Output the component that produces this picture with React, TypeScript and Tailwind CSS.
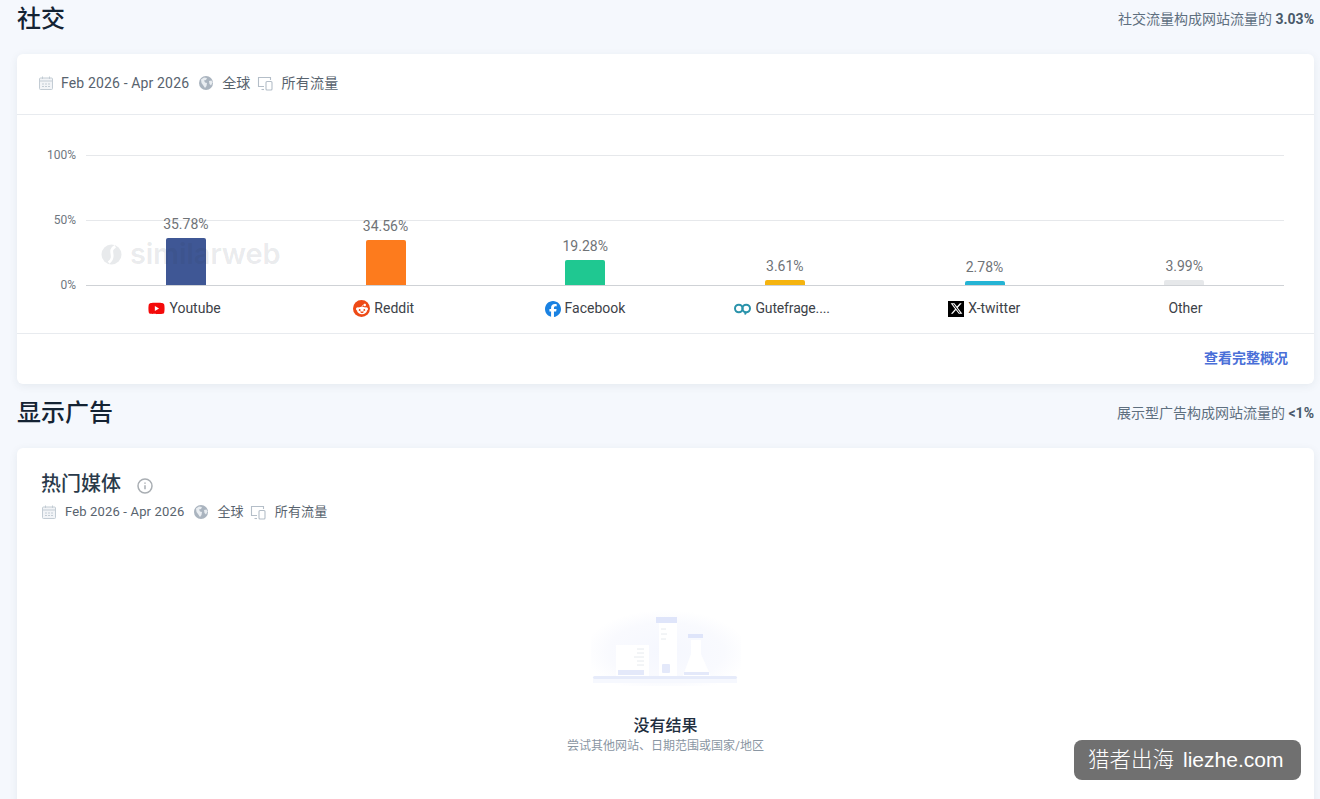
import { FaFacebook, FaRedditAlien, FaXTwitter, FaYoutube } from "react-icons/fa6";

const CalendarIcon = () => (
  <svg width="16" height="16" viewBox="0 0 16 16" fill="none" stroke="#c3ccd4" strokeWidth="1">
    <rect x="1.500" y="3" width="13" height="11.500" rx="1" fill="#f2f4f7" />
    <path d="M1.500 6h13M4.500 1.500v2.500M11.500 1.500v2.500" />
    <path d="M4 9h2M7 9h2M10 9h2M4 11.500h2M7 11.500h2M10 11.500h2" stroke="#c3ccd4" />
  </svg>
);

const GlobeIcon = () => (
  <svg width="16" height="16" viewBox="0 0 16 16">
    <circle cx="8" cy="8" r="7" fill="#aab4bf" />
    <path d="M3 4.500l3-2 3 .5-1 2-2 .5 1 2 2 .5-.5 3-1.500 2L5 10 3.500 8z" fill="#e9edf1" />
    <path d="M11 6l2.500-.5 1 2-1.500 3-1.500-1.500z" fill="#e9edf1" />
  </svg>
);

const DevicesIcon = () => (
  <svg width="17" height="16" viewBox="0 0 17 16" fill="none" stroke="#b4bec8" strokeWidth="1.100">
    <path d="M7 11.500H1.500v-9h12V5" />
    <path d="M4.500 14.500H7" />
    <rect x="9" y="6.500" width="6" height="8.500" rx="1" />
  </svg>
);

const InfoIcon = () => (
  <svg width="16" height="16" viewBox="0 0 16 16" fill="none" stroke="#a9aeb3" strokeWidth="1.500">
    <circle cx="8" cy="8" r="7" />
    <path d="M8 7.200v4" />
    <path d="M8 4.400v1.400" />
  </svg>
);

const RedditIcon = () => (
  <span className="flex h-[17px] w-[17px] items-center justify-center rounded-full bg-[#ee4a16] text-white">
    <FaRedditAlien size={12} />
  </span>
);

const GutefrageIcon = () => (
  <svg width="17" height="12" viewBox="0 0 17 12" fill="none" stroke="#2a93ab" strokeWidth="2">
    <circle cx="4.800" cy="5.500" r="3.800" />
    <circle cx="12.200" cy="5.500" r="3.800" />
    <path d="M12 9l-1 2.500" />
  </svg>
);

const EmptyIllustration = () => (
  <svg width="150" height="84" viewBox="0 0 150 84">
    <defs>
      <radialGradient id="glow" cx="0.500" cy="0.550" r="0.550">
        <stop offset="0" stopColor="#f5f7fe" />
        <stop offset="0.700" stopColor="#f9fafe" />
        <stop offset="1" stopColor="#ffffff" />
      </radialGradient>
    </defs>
    <rect x="0" y="0" width="150" height="76" fill="url(#glow)" />
    <rect x="25" y="35" width="33" height="36" fill="#ffffff" />
    <rect x="68" y="12" width="18" height="60" fill="#ffffff" />
    <path d="M100 30h10v14l12 27H90l10-27z" fill="#ffffff" />
    <rect x="65" y="7" width="21" height="6" fill="#dfe5fa" />
    <rect x="97" y="24" width="15" height="4" fill="#dfe5fa" />
    <rect x="27" y="60" width="26" height="5" fill="#e4e9fa" />
    <rect x="71" y="54" width="8" height="9" rx="1" fill="#e4e9fa" />
    <rect x="93" y="62" width="25" height="3" fill="#e4e9fa" />
    <path d="M46 39h7M46 43h7M43 47h10M46 51h7M46 55h7" stroke="#e0e4ea" strokeWidth="0.800" />
    <path d="M70 19h5M70 24h6M70 29h5" stroke="#e0e4ea" strokeWidth="0.800" />
    <rect x="2" y="66" width="144" height="3" rx="1.500" fill="#e6ebfa" />
    <rect x="2" y="69" width="144" height="4" fill="#f6f8fe" />
  </svg>
);

const bars = [
  { value: "35.78%", height: 47, color: "bg-[#3f5795]", name: "Youtube", labelClass: "", icon: <FaYoutube size={17} color="#f40a0a" /> },
  { value: "34.56%", height: 45, color: "bg-[#fd7b1d]", name: "Reddit", labelClass: "pl-[2px]", icon: <RedditIcon /> },
  { value: "19.28%", height: 25, color: "bg-[#1fc891]", name: "Facebook", labelClass: "pl-[4px]", icon: <FaFacebook size={16} color="#1a82e2" /> },
  { value: "3.61%", height: 5, color: "bg-[#f5b40f]", name: "Gutefrage....", labelClass: "pr-[5px] tracking-[-0.15px]", icon: <GutefrageIcon /> },
  { value: "2.78%", height: 4, color: "bg-[#25b4d5]", name: "X-twitter", labelClass: "pr-[4px]", icon: (
    <span className="flex h-4 w-4 items-center justify-center bg-black text-white">
      <FaXTwitter size={13} />
    </span>
  ) },
  { value: "3.99%", height: 5, color: "bg-[#e6e8ea]", name: "Other", labelClass: "", icon: null },
];

const FONT = "font-['Roboto','Noto_Sans_CJK_SC',sans-serif]";

export default function App() {
  return (
    <div className={`relative h-[799px] overflow-hidden bg-[#f5f8fd] pl-[17px] pr-[6px] ${FONT}`}>
      <div className="flex h-[38px] items-center justify-between">
        <h2 className="text-[24px] font-medium text-[#142333]">社交</h2>
        <p className="text-[14px] text-[#5e6f7f]">
          社交流量构成网站流量的 <b className="text-[14px] text-[#4a5a6a]">3.03%</b>
        </p>
      </div>

      <section className="mt-[16px] h-[330px] rounded-md bg-white shadow-[0_2px_8px_rgba(42,62,82,0.08)]">
        <div className="flex h-[61px] items-center border-b border-[#e8ebef] pb-[2px] pl-[21px] text-[14px] tracking-[0.15px] text-[#58636e]">
          <CalendarIcon />
          <span className="ml-[7px]">Feb 2026 - Apr 2026</span>
          <span className="ml-[9px]"><GlobeIcon /></span>
          <span className="ml-[8px]">全球</span>
          <span className="ml-[6px]"><DevicesIcon /></span>
          <span className="ml-[8px] tracking-[0.25px]">所有流量</span>
        </div>

        <div className="relative flex h-[218px] pt-[32px]">
          <div className="flex h-[146px] w-[59px] flex-col items-end justify-between text-[12px] leading-[16px] text-[#6f7780]">
            <span>100%</span>
            <span>50%</span>
            <span>0%</span>
          </div>
          <div className="relative ml-[10px] mr-[30px] mt-[8px] flex-1">
            <div className="absolute inset-x-0 top-0 flex h-[131px] flex-col justify-between">
              <div className="h-px bg-[#e6e8eb]" />
              <div className="h-px bg-[#e6e8eb]" />
              <div className="h-px bg-[#cfd2d6]" />
            </div>
            <div className="relative flex h-[130px] items-end">
              {bars.map((bar) => (
                <div key={bar.name} className="flex flex-1 flex-col items-center">
                  <span className="mb-[6px] text-[14px] leading-[16px] text-[#6f7377]">{bar.value}</span>
                  <div className={`w-[40px] rounded-t-[2px] ${bar.color}`} style={{ height: bar.height }} />
                </div>
              ))}
            </div>
            <div className="flex h-[46px] pt-px">
              {bars.map((bar) => (
                <div key={bar.name} className={`flex flex-1 items-center justify-center gap-1 text-[14px] text-[#3d4248] ${bar.labelClass}`}>
                  {bar.icon}
                  <span>{bar.name}</span>
                </div>
              ))}
            </div>
          </div>
          <div className="pointer-events-none absolute left-[84px] top-[123px] flex items-center gap-[8px] text-[29px] font-semibold leading-[32px] text-[rgba(42,62,82,0.11)]">
            <svg width="21" height="21" viewBox="0 0 22 22">
              <circle cx="11" cy="11" r="10.500" fill="rgba(42,62,82,0.11)" />
              <path d="M15 2.500C6 7 17 13 8 19.500" stroke="#ffffff" strokeWidth="3" fill="none" />
            </svg>
            <span className="font-['Inter',sans-serif] tracking-[-0.2px]">similarweb</span>
          </div>
        </div>

        <div className="flex h-[51px] items-center justify-end border-t border-[#e8ebef] pb-[2px] pr-[26px]">
          <a className="text-[14px] font-bold text-[#4a6fd8]">查看完整概况</a>
        </div>
      </section>

      <div className="mt-[10px] flex h-[38px] items-center justify-between">
        <h2 className="text-[24px] font-medium text-[#142333]">显示广告</h2>
        <p className="text-[14px] text-[#5e6f7f]">
          展示型广告构成网站流量的 <b className="text-[14px] text-[#4a5a6a]">&lt;1%</b>
        </p>
      </div>

      <section className="mt-[16px] h-[400px] rounded-md bg-white pl-[24px] pt-[23px] shadow-[0_2px_8px_rgba(42,62,82,0.08)]">
        <div className="flex h-[26px] items-center">
          <h3 className="text-[20px] font-medium text-[#2a3a4a]">热门媒体</h3>
          <span className="ml-[16px] mt-[3px]"><InfoIcon /></span>
        </div>
        <div className="mt-[4px] flex h-[22px] items-center text-[13px] tracking-[0.16px] text-[#58636e]">
          <CalendarIcon />
          <span className="ml-[8px]">Feb 2026 - Apr 2026</span>
          <span className="ml-[9px]"><GlobeIcon /></span>
          <span className="ml-[8px]">全球</span>
          <span className="ml-[6px]"><DevicesIcon /></span>
          <span className="ml-[8px]">所有流量</span>
        </div>
        <div className="mt-[87px] flex flex-col items-center pr-[24px]">
          <EmptyIllustration />
          <h4 className="mt-[20px] text-[16px] font-medium leading-[24px] text-[#1f2f3f]">没有结果</h4>
          <p className="text-[12px] leading-[16px] text-[#8a96a3]">尝试其他网站、日期范围或国家/地区</p>
        </div>
      </section>

      <div className="absolute left-[1074px] top-[740px] flex h-[40px] w-[227px] items-center rounded-lg bg-[#707070] pl-[14px] text-white">
        <span className="text-[21.500px] font-light">猎者出海</span>
        <span className="ml-[9px] font-['Liberation_Sans',sans-serif] text-[21px]">liezhe.com</span>
      </div>
    </div>
  );
}
